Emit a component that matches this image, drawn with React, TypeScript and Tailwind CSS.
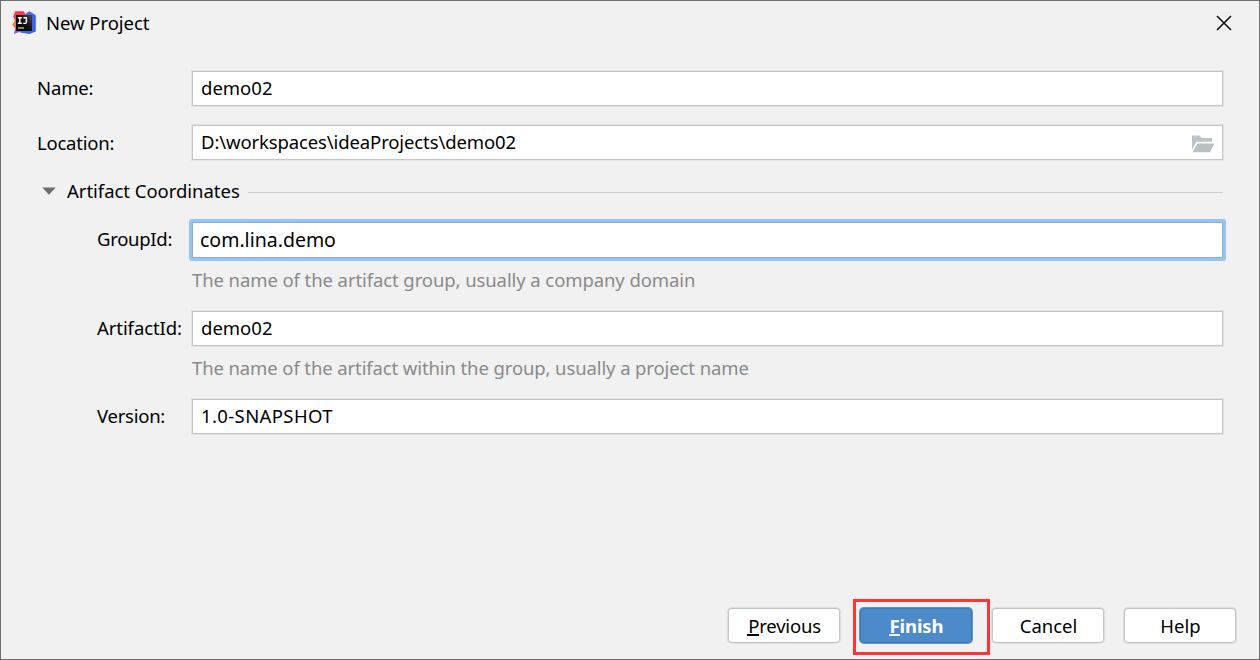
import type { ReactNode } from "react";

function IdeaLogo() {
  return (
    <svg width="24" height="24" viewBox="0 0 24 24" className="-mt-px block shrink-0">
      <defs>
        <linearGradient id="left" x1="0" y1="0" x2="0" y2="1">
          <stop offset="0" stopColor="#fb2f55" />
          <stop offset="0.42" stopColor="#f7533f" />
          <stop offset="0.58" stopColor="#fb8a24" />
          <stop offset="0.75" stopColor="#c64796" />
          <stop offset="1" stopColor="#8c4fe0" />
        </linearGradient>
        <linearGradient id="right" x1="0" y1="0" x2="1" y2="0.6">
          <stop offset="0" stopColor="#8a4ad0" />
          <stop offset="0.5" stopColor="#3f67ee" />
          <stop offset="1" stopColor="#3b63dd" />
        </linearGradient>
        <linearGradient id="tile" x1="1" y1="0" x2="0" y2="1">
          <stop offset="0" stopColor="#454545" />
          <stop offset="0.5" stopColor="#101010" />
          <stop offset="1" stopColor="#000" />
        </linearGradient>
      </defs>
      <path d="M12 4L17.2 0.2L23.8 4.2V20.4L17.5 23L8 21.5Z" fill="url(#right)" />
      <path d="M3.2 0.2H11.5L15 5V20L9.6 20L2 23L3.4 17.2L0 13.8L3 10L1.2 5.6Z" fill="url(#left)" />
      <rect x="4" y="4" width="16" height="16" fill="url(#tile)" />
      <path d="M5.8 6.7H9.8M7.8 6.7V12.2M5.8 12.3H9.8M11.4 6.7H14.4V11Q14.4 12.4 13 12.4H11.2" fill="none" stroke="#fff" strokeWidth="1.4" />
      <path d="M6 17H12" stroke="#d8d8d8" strokeWidth="1.2" />
    </svg>
  );
}

function FolderIcon() {
  return (
    <svg width="24" height="18" viewBox="0 0 24 18" className="mt-[2px] block">
      <path d="M1 14.6V0.5H8.2L10.6 3H21V6.8H5.5Z" fill="#adb4b9" fillOpacity="0.8" />
      <path d="M6.4 8.4H23.4L19 17.3H1.6Z" fill="#b9c0c4" />
    </svg>
  );
}

function Field({ value, className = "", children }: { value: string; className?: string; children?: ReactNode }) {
  return (
    <div className="flex h-[35px] w-[1031px] items-center justify-between border border-[#c4c4c4] bg-white pr-[7px] pl-2 shadow-[0_0_0_1px_#e2e2e2]">
      <span className={`pb-[2px] ${className}`}>{value}</span>
      {children}
    </div>
  );
}

function Button({
  children,
  className = "",
  tone = "border-[#c4c4c4] bg-white shadow-[0_0_0_1px_#dedede]",
}: {
  children: ReactNode;
  className?: string;
  tone?: string;
}) {
  return (
    <button className={`flex h-[35px] w-28 items-center justify-center rounded-[4px] border pl-px ${tone} ${className}`}>
      {children}
    </button>
  );
}

function Mnemonic({ letter }: { letter: string }) {
  return <span className="relative after:absolute after:-left-px after:right-0 after:bottom-[2px] after:h-[2px] after:bg-current">{letter}</span>;
}

export default function App() {
  return (
    <div className="flex h-[660px] w-[1260px] flex-col overflow-hidden border border-[#6e6e6e] bg-[#f1f1f1] font-['Noto_Sans',sans-serif] text-[18.5px] leading-6 whitespace-nowrap text-black">
      <header className="flex h-[70px] items-start justify-between pt-[10px] pr-[27px] pl-[11px]">
        <div className="flex items-center gap-[10px]">
          <IdeaLogo />
          <span className="tracking-[-0.05px]">New Project</span>
        </div>
        <svg width="16" height="16" viewBox="0 0 16 16" className="mt-1">
          <path d="M1 1L15 15M15 1L1 15" stroke="#111" strokeWidth="1.6" />
        </svg>
      </header>
      <main className="flex flex-col pl-9">
        <div className="flex h-[35px] items-center">
          <span className="w-[155px] pb-[2px] tracking-[-0.15px]">Name:</span>
          <Field value="demo02" />
        </div>
        <div className="mt-[19px] flex h-[35px] items-center">
          <span className="w-[155px] pt-px tracking-[-0.22px]">Location:</span>
          <Field value="D:\workspaces\ideaProjects\demo02" className="tracking-[-0.12px]">
            <FolderIcon />
          </Field>
        </div>
        <div className="mt-[19px] flex h-6 w-[1186px] items-center pl-[5px]">
          <svg width="14" height="8" viewBox="0 0 14 8">
            <path d="M0.3 0.5H13.7L7 7.7Z" fill="#6e6e6e" />
          </svg>
          <span className="ml-[11px] w-[181px] tracking-[-0.03px]">Artifact Coordinates</span>
          <div className="mt-[2px] h-px flex-1 bg-[#cfcfcf]" />
        </div>
        <div className="mt-4 flex h-[42px] items-center pl-[60px]">
          <span className="w-[92px] pb-[2px] tracking-[-0.28px]">GroupId:</span>
          <div className="flex h-[42px] w-[1037px] items-center rounded-[3px] border-[3px] border-[#97c3f3]">
            <div className="flex h-9 w-full items-center border border-[#87afda] bg-white pl-[7px]">
              <span className="text-[19.5px]">com.lina.demo</span>
            </div>
          </div>
        </div>
        <p className="mt-[7px] h-6 pl-[155px] tracking-[-0.09px] text-[#8a8a8a]">The name of the artifact group, usually a company domain</p>
        <div className="mt-[19px] flex h-[35px] items-center pl-[60px]">
          <span className="w-[95px] pb-[2px] tracking-[-0.08px]">ArtifactId:</span>
          <Field value="demo02" />
        </div>
        <p className="mt-[10px] h-6 pl-[155px] tracking-[-0.11px] text-[#8a8a8a]">The name of the artifact within the group, usually a project name</p>
        <div className="mt-[19px] flex h-[35px] items-center pl-[60px]">
          <span className="w-[95px] pb-[2px] tracking-[-0.25px]">Version:</span>
          <Field value="1.0-SNAPSHOT" className="tracking-[0.38px]" />
        </div>
      </main>
      <footer className="mt-auto flex items-center justify-end pr-[23px] pb-1">
        <Button className="-mt-[3px] tracking-[-0.2px]">
          <span><Mnemonic letter="P" />revious</span>
        </Button>
        <div className="ml-[13px] flex h-14 w-[137px] items-start border-[3px] border-[#fc3436] pt-[6px] pl-1">
          <Button
            tone="border-[#3c78ba] bg-[#4d8ac9] shadow-[0_0_0_1px_#5f94cd]"
            className="pl-[2px] font-bold tracking-[-0.1px] text-white"
          >
            <span><Mnemonic letter="F" />inish</span>
          </Button>
        </div>
        <Button className="-mt-[3px] ml-[2px] tracking-[-0.05px]">Cancel</Button>
        <Button className="-mt-[3px] ml-5 pl-[4px]">Help</Button>
      </footer>
    </div>
  );
}
